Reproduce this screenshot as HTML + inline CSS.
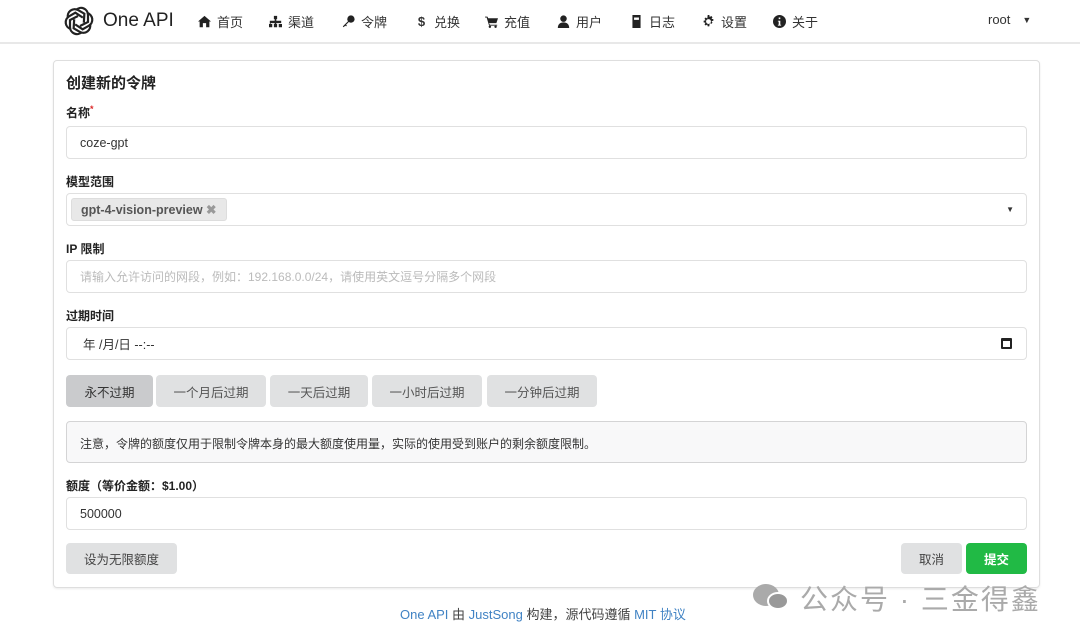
<!DOCTYPE html>
<html><head><meta charset="utf-8"><style>
*{box-sizing:border-box;margin:0;padding:0}
body{width:1080px;height:640px;background:#fff;font-family:"Liberation Sans","Noto Sans CJK SC",sans-serif;color:#222;position:relative;overflow:hidden;font-size:13px}
.abs{position:absolute}
.nav{left:0;top:0;width:1080px;height:44px;border-bottom:2px solid #e8e8e8;background:#fff}
.ni{top:12px;font-size:13px;color:#333;display:flex;align-items:center;gap:6px}
.ni svg{width:13px;height:13px;fill:#222}
.card{left:53px;top:60px;width:987px;height:528px;border:1px solid #dedede;border-radius:4px;box-shadow:0 1px 2px rgba(0,0,0,.08)}
.lbl{left:66px;font-size:12px;font-weight:bold;color:#222}
.inp{left:66px;width:961px;height:33px;border:1px solid #e0e0e0;border-radius:4px;padding-left:13px;display:flex;align-items:center;font-size:12.5px;color:#333}
.btn{top:375px;height:32px;background:#e0e1e2;border-radius:4px;display:flex;align-items:center;justify-content:center;font-size:12.5px;color:#555}
</style></head><body>
<div class="abs nav"></div>
<svg class="abs" style="left:63px;top:5px" width="32" height="32" viewBox="0 0 32 32" fill="none" stroke="#222" stroke-width="2.2">
<g transform="translate(16 16)">
<path d="M-3-11a7 7 0 0 1 12 5l0 7-8 4"/>
<path d="M-3-11a7 7 0 0 1 12 5l0 7-8 4" transform="rotate(60)"/>
<path d="M-3-11a7 7 0 0 1 12 5l0 7-8 4" transform="rotate(120)"/>
<path d="M-3-11a7 7 0 0 1 12 5l0 7-8 4" transform="rotate(180)"/>
<path d="M-3-11a7 7 0 0 1 12 5l0 7-8 4" transform="rotate(240)"/>
<path d="M-3-11a7 7 0 0 1 12 5l0 7-8 4" transform="rotate(300)"/>
</g></svg>
<div class="abs" style="left:103px;top:10px;font-size:19px;color:#222">One API</div>
<div class="abs ni" style="left:198px"><svg viewBox="0 0 16 16"><path d="M8 1L0 8h2v7h4v-5h4v5h4V8h2z"/></svg>首页</div>
<div class="abs ni" style="left:269px"><svg viewBox="0 0 16 16"><path d="M6 1h4v4H9v2h6v3h-1v1h2v4h-4v-4h2v-1H9v1h1v4H6v-4h1v-1H2v1h2v4H0v-4h1V7h6V5H6z"/></svg>渠道</div>
<div class="abs ni" style="left:342px"><svg viewBox="0 0 16 16"><circle cx="11" cy="5" r="4.5"/><path d="M8 7L1 14l1 1 2-2 1 1 1-1-1-1 4-4z"/></svg>令牌</div>
<div class="abs ni" style="left:415px"><b style="width:13px;text-align:center">$</b>兑换</div>
<div class="abs ni" style="left:485px"><svg viewBox="0 0 16 16"><path d="M0 2h3l1 2h12l-2 6H5l1 2h9v1H5L2 3H0z"/><circle cx="6" cy="14.5" r="1.5"/><circle cx="13" cy="14.5" r="1.5"/></svg>充值</div>
<div class="abs ni" style="left:557px"><svg viewBox="0 0 16 16"><circle cx="8" cy="4.5" r="4"/><path d="M1 16c0-5 3-7 7-7s7 2 7 7z"/></svg>用户</div>
<div class="abs ni" style="left:630px"><svg viewBox="0 0 16 16"><path d="M3 0h10v16H3zM5 3v3h6V3z" fill-rule="evenodd"/></svg>日志</div>
<div class="abs ni" style="left:702px"><svg viewBox="0 0 16 16"><path d="M7 0h2l.5 2.5 2-1.2 1.4 1.4-1.2 2L14 5v2l-2.3.5 1.2 2-1.4 1.4-2-1.2L9 14H7l-.5-2.3-2 1.2-1.4-1.4 1.2-2L2 9V7l2.3-.5-1.2-2 1.4-1.4 2 1.2zM8 5a3 3 0 100 6 3 3 0 000-6z" fill-rule="evenodd"/></svg>设置</div>
<div class="abs ni" style="left:773px"><svg viewBox="0 0 16 16"><path d="M8 0a8 8 0 110 16A8 8 0 018 0zM7 3v2h2V3zM6 7v1h1v4H6v1h4v-1H9V7z" fill-rule="evenodd"/></svg>关于</div>
<div class="abs ni" style="left:988px">root <span style="font-size:9px;margin-left:6px">▼</span></div>
<div class="abs card"></div>
<div class="abs" style="left:66px;top:72px;font-size:15px;font-weight:bold">创建新的令牌</div>
<div class="abs lbl" style="top:104px">名称<span style="color:#db2828;font-size:9px;vertical-align:top">*</span></div>
<div class="abs inp" style="top:126px">coze-gpt</div>
<div class="abs lbl" style="top:173px">模型范围</div>
<div class="abs inp" style="top:193px;padding-left:4px"><span style="background:#e8e8e8;border-radius:3px;padding:3px 9px;font-weight:bold;color:#555;font-size:12.5px;border:1px solid #ddd">gpt-4-vision-preview <span style="color:#999">✖</span></span><span style="position:absolute;right:12px;font-size:8px">▼</span></div>
<div class="abs lbl" style="top:240px">IP 限制</div>
<div class="abs inp" style="top:260px;color:#bbb;font-size:12px">请输入允许访问的网段，例如：192.168.0.0/24，请使用英文逗号分隔多个网段</div>
<div class="abs lbl" style="top:307px">过期时间</div>
<div class="abs inp" style="top:327px;padding-left:16px">年 /月/日 --:--<span style="position:absolute;right:14px;width:11px;height:11px;border:2px solid #222;border-top-width:3px;border-radius:1px"></span></div>
<div class="abs btn" style="left:66px;width:87px;background:#cacbcd;color:#333">永不过期</div>
<div class="abs btn" style="left:156px;width:110px">一个月后过期</div>
<div class="abs btn" style="left:270px;width:98px">一天后过期</div>
<div class="abs btn" style="left:372px;width:110px">一小时后过期</div>
<div class="abs btn" style="left:487px;width:110px">一分钟后过期</div>
<div class="abs" style="left:66px;top:421px;width:961px;height:42px;background:#f8f8f9;border:1px solid #d4d4d5;border-radius:4px;padding:13px 0 0 13px;font-size:12px;color:#333">注意，令牌的额度仅用于限制令牌本身的最大额度使用量，实际的使用受到账户的剩余额度限制。</div>
<div class="abs lbl" style="top:477px">额度（等价金额：$1.00）</div>
<div class="abs inp" style="top:497px">500000</div>
<div class="abs btn" style="left:66px;top:543px;width:111px;height:31px;color:#444">设为无限额度</div>
<div class="abs btn" style="left:901px;top:543px;width:61px;height:31px;color:#444">取消</div>
<div class="abs btn" style="left:966px;top:543px;width:61px;height:31px;background:#21ba45;color:#fff;font-weight:bold">提交</div>
<div class="abs" style="left:400px;top:604px;font-size:13px;color:#444"><span style="color:#4183c4">One API</span> 由 <span style="color:#4183c4">JustSong</span> 构建，源代码遵循 <span style="color:#4183c4">MIT 协议</span></div>
<div class="abs" style="left:753px;top:582px;width:40px;height:30px">
<div class="abs" style="left:0;top:2px;width:26px;height:22px;border-radius:50%;background:#aaa"></div>
<div class="abs" style="left:14px;top:10px;width:22px;height:18px;border-radius:50%;background:#999;border:2px solid #fff"></div></div>
<div class="abs" style="left:800px;top:578px;font-size:28px;color:#aaa;letter-spacing:2px">公众号 · 三金得鑫</div>
</body></html>
